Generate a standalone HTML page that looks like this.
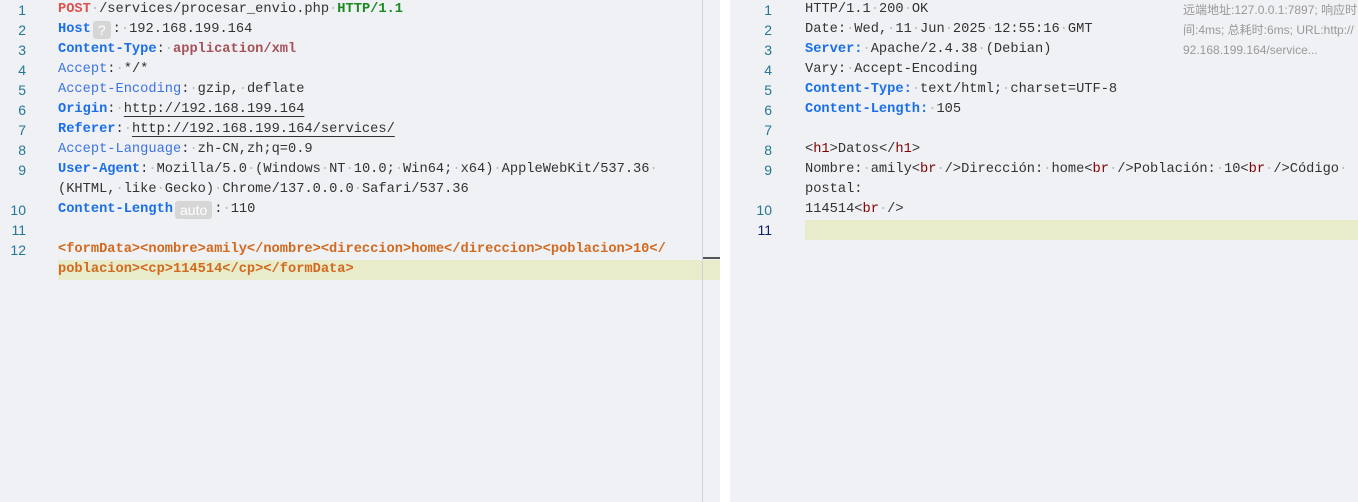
<!DOCTYPE html>
<html><head><meta charset="utf-8"><style>
*{margin:0;padding:0;box-sizing:border-box}
body{width:1358px;height:502px;overflow:hidden;background:#fff;position:relative;font-family:"Liberation Mono",monospace;font-size:13.7px}
.pane{position:absolute;top:0;height:502px;background:#f0f1f5}
#l{left:0;width:720px}
#r{left:730px;width:628px}
.vl{position:absolute;left:702px;top:0;width:1px;height:502px;background:#d0d0d6}
.row{position:absolute;left:0;height:20px;line-height:20px;white-space:pre;width:100%}
.n{position:absolute;width:26px;text-align:right;color:#237893;font-family:"Liberation Sans",sans-serif;font-size:14px}
.t{position:absolute;color:#333}
.d{color:#bbb}
.hl{position:absolute;background:#e8eccb;height:20px}
.red{color:#d9534f;font-weight:bold}
.grn{color:#198a1f;font-weight:bold}
.b{color:#1a6fe8;font-weight:bold}
.lb{color:#3d73e0}
.br{color:#a65258;font-weight:bold}
.o{color:#d2691e;font-weight:bold}
.u{text-decoration:underline;text-underline-offset:4px}
.tag{display:inline-block;background:#d6d6d6;color:#fff;border-radius:3px;line-height:18px;font-family:"Liberation Sans",sans-serif;font-size:14px;padding:0 5px;margin:0 2px;vertical-align:top;margin-top:1px}
.k{color:#800000}
.info{position:absolute;left:1183px;top:0;width:175px;color:#999;font-family:"Liberation Sans","Noto Sans CJK SC",sans-serif;font-size:12px;line-height:20px;white-space:nowrap;overflow:hidden}
</style></head><body>
<div class="pane" id="l">
<div class="hl" style="left:58px;top:260px;width:662px"></div>
<div class="vl"></div>
<div style="position:absolute;left:703px;top:257px;width:17px;height:2px;background:#555"></div>
<div class="row" style="top:0"><span class="n">1</span><span class="t" style="left:58px"><span class="red">POST</span><span class="d">·</span>/services/procesar_envio.php<span class="d">·</span><span class="grn">HTTP/1.1</span></span></div>
<div class="row" style="top:20px"><span class="n">2</span><span class="t" style="left:58px"><span class="b">Host</span><span class="tag">?</span>:<span class="d">·</span>192.168.199.164</span></div>
<div class="row" style="top:40px"><span class="n">3</span><span class="t" style="left:58px"><span class="b">Content-Type</span>:<span class="d">·</span><span class="br">application/xml</span></span></div>
<div class="row" style="top:60px"><span class="n">4</span><span class="t" style="left:58px"><span class="lb">Accept</span>:<span class="d">·</span>*/*</span></div>
<div class="row" style="top:80px"><span class="n">5</span><span class="t" style="left:58px"><span class="lb">Accept-Encoding</span>:<span class="d">·</span>gzip,<span class="d">·</span>deflate</span></div>
<div class="row" style="top:100px"><span class="n">6</span><span class="t" style="left:58px"><span class="b">Origin</span>:<span class="d">·</span><span class="u">http://192.168.199.164</span></span></div>
<div class="row" style="top:120px"><span class="n">7</span><span class="t" style="left:58px"><span class="b">Referer</span>:<span class="d">·</span><span class="u">http://192.168.199.164/services/</span></span></div>
<div class="row" style="top:140px"><span class="n">8</span><span class="t" style="left:58px"><span class="lb">Accept-Language</span>:<span class="d">·</span>zh-CN,zh;q=0.9</span></div>
<div class="row" style="top:160px"><span class="n">9</span><span class="t" style="left:58px"><span class="b">User-Agent</span>:<span class="d">·</span>Mozilla/5.0<span class="d">·</span>(Windows<span class="d">·</span>NT<span class="d">·</span>10.0;<span class="d">·</span>Win64;<span class="d">·</span>x64)<span class="d">·</span>AppleWebKit/537.36<span class="d">·</span></span></div>
<div class="row" style="top:180px"><span class="t" style="left:58px">(KHTML,<span class="d">·</span>like<span class="d">·</span>Gecko)<span class="d">·</span>Chrome/137.0.0.0<span class="d">·</span>Safari/537.36</span></div>
<div class="row" style="top:200px"><span class="n">10</span><span class="t" style="left:58px"><span class="b">Content-Length</span><span class="tag">auto</span>:<span class="d">·</span>110</span></div>
<div class="row" style="top:220px"><span class="n">11</span></div>
<div class="row" style="top:240px"><span class="n">12</span><span class="t o" style="left:58px">&lt;formData&gt;&lt;nombre&gt;amily&lt;/nombre&gt;&lt;direccion&gt;home&lt;/direccion&gt;&lt;poblacion&gt;10&lt;/</span></div>
<div class="row" style="top:260px"><span class="t o" style="left:58px">poblacion&gt;&lt;cp&gt;114514&lt;/cp&gt;&lt;/formData&gt;</span></div>
</div>
<div class="pane" id="r">
<div class="hl" style="left:75px;top:220px;width:553px"></div>
<div class="row" style="top:0"><span class="n" style="left:16px">1</span><span class="t" style="left:75px">HTTP/1.1<span class="d">·</span>200<span class="d">·</span>OK</span></div>
<div class="row" style="top:20px"><span class="n" style="left:16px">2</span><span class="t" style="left:75px">Date:<span class="d">·</span>Wed,<span class="d">·</span>11<span class="d">·</span>Jun<span class="d">·</span>2025<span class="d">·</span>12:55:16<span class="d">·</span>GMT</span></div>
<div class="row" style="top:40px"><span class="n" style="left:16px">3</span><span class="t" style="left:75px"><span class="b">Server:</span><span class="d">·</span>Apache/2.4.38<span class="d">·</span>(Debian)</span></div>
<div class="row" style="top:60px"><span class="n" style="left:16px">4</span><span class="t" style="left:75px">Vary:<span class="d">·</span>Accept-Encoding</span></div>
<div class="row" style="top:80px"><span class="n" style="left:16px">5</span><span class="t" style="left:75px"><span class="b">Content-Type:</span><span class="d">·</span>text/html;<span class="d">·</span>charset=UTF-8</span></div>
<div class="row" style="top:100px"><span class="n" style="left:16px">6</span><span class="t" style="left:75px"><span class="b">Content-Length:</span><span class="d">·</span>105</span></div>
<div class="row" style="top:120px"><span class="n" style="left:16px">7</span></div>
<div class="row" style="top:140px"><span class="n" style="left:16px">8</span><span class="t" style="left:75px">&lt;<span class="k">h1</span>&gt;Datos&lt;/<span class="k">h1</span>&gt;</span></div>
<div class="row" style="top:160px"><span class="n" style="left:16px">9</span><span class="t" style="left:75px">Nombre:<span class="d">·</span>amily&lt;<span class="k">br</span><span class="d">·</span>/&gt;Dirección:<span class="d">·</span>home&lt;<span class="k">br</span><span class="d">·</span>/&gt;Población:<span class="d">·</span>10&lt;<span class="k">br</span><span class="d">·</span>/&gt;Código<span class="d">·</span></span></div>
<div class="row" style="top:180px"><span class="t" style="left:75px">postal:</span></div>
<div class="row" style="top:200px"><span class="n" style="left:16px">10</span><span class="t" style="left:75px">114514&lt;<span class="k">br</span><span class="d">·</span>/&gt;</span></div>
<div class="row" style="top:220px"><span class="n" style="left:16px;color:#0b216f">11</span></div>
</div>
<div class="info">远端地址:127.0.0.1:7897; 响应时<br>间:4ms; 总耗时:6ms; URL:http://<br>92.168.199.164/service...</div>
</body></html>
